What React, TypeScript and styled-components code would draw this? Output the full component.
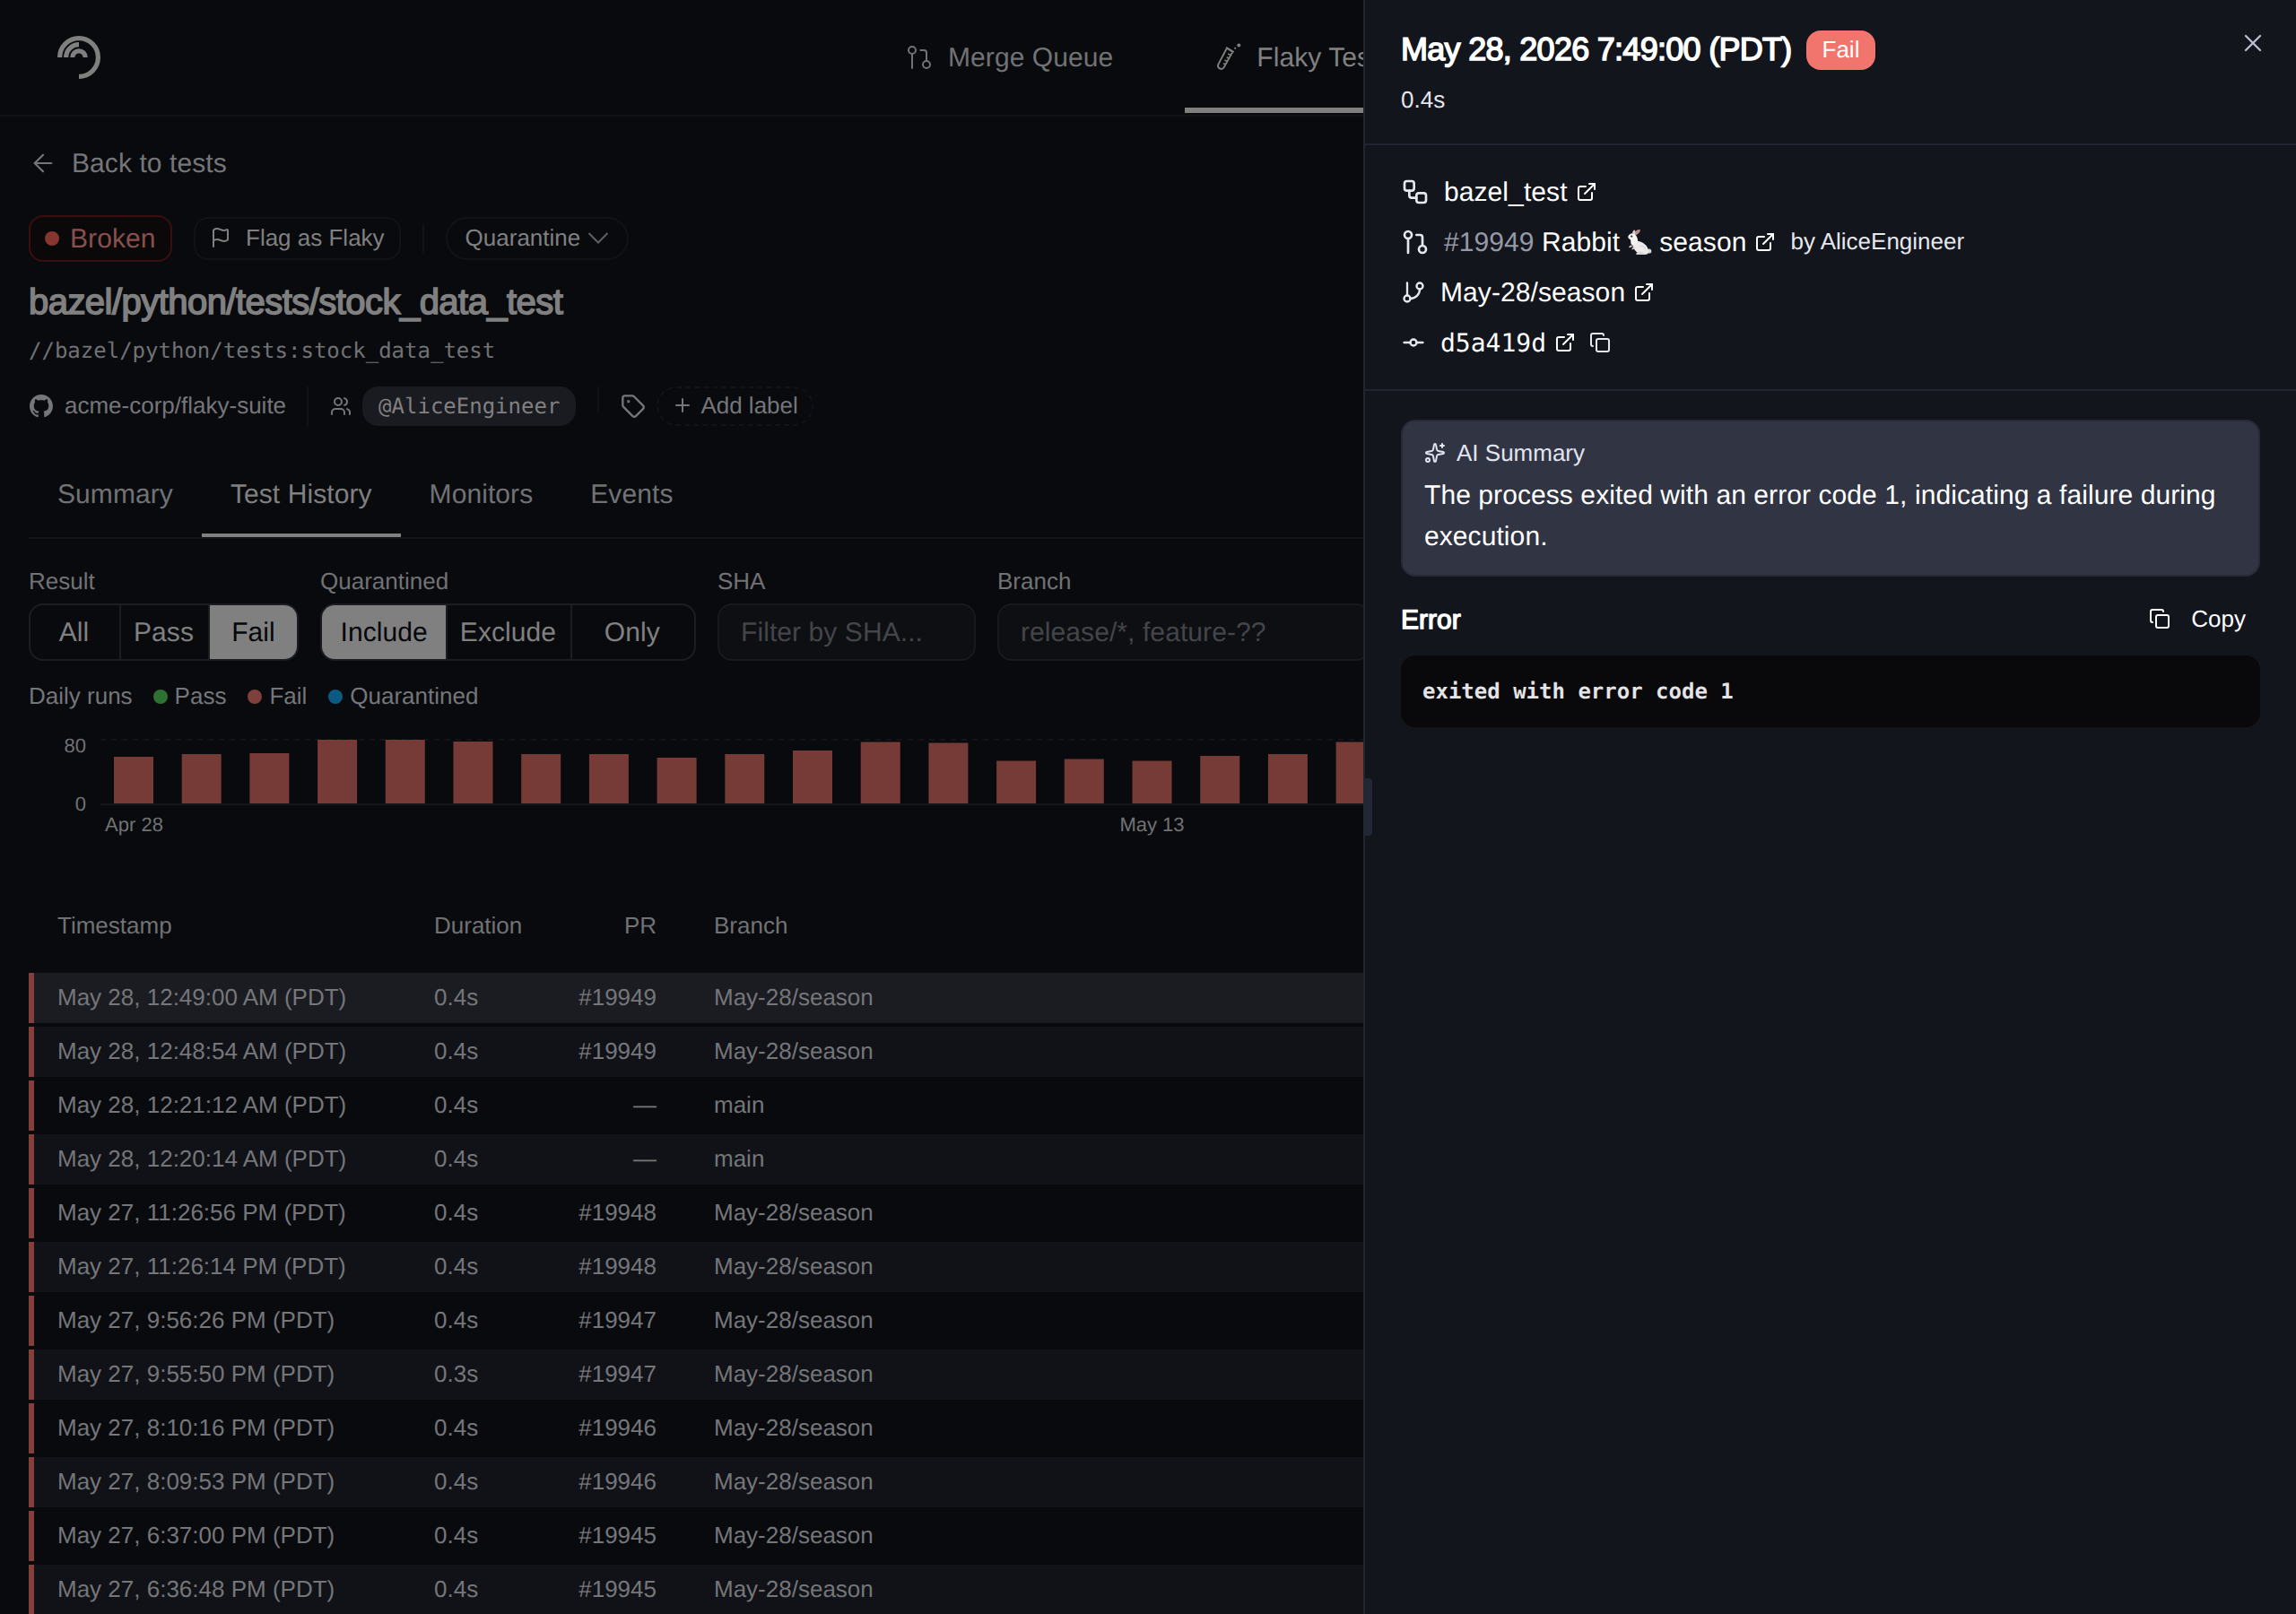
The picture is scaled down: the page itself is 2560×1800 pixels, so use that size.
import React from "react";
import styled, { createGlobalStyle, css } from "styled-components";
import {
  ArrowLeft,
  Copy,
  ExternalLink,
  Flag,
  GitBranch,
  GitCommitHorizontal,
  GitPullRequest,
  Plus,
  Sparkles,
  Tag,
  Users,
  Workflow,
  X,
} from "lucide-react";

const sans = `"Liberation Sans", Arial, Helvetica, sans-serif`;
const mono = `"DejaVu Sans Mono", Menlo, monospace`;

const color = {
  page: "#090a0e",
  line: "#111319",
  control: "#1b1d22",
  field: "#0d0f13",
  strong: "#808080",
  text: "#757679",
  muted: "#717274",
  placeholder: "#434549",
  fail: "#763b37",
  panel: "#12151c",
  panelLine: "#222631",
};

const largeText = css`
  font-size: 30px;
  letter-spacing: 0.08px;
`;

const GlobalStyle = createGlobalStyle`
  * { box-sizing: border-box; }
  body {
    margin: 0;
    background: ${color.page};
    font-family: ${sans};
    font-size: 26px;
    text-rendering: geometricPrecision;
  }
  button { text-rendering: inherit; }
  svg { flex: none; display: block; }
`;

const Shell = styled.div`
  display: grid;
  grid-template-columns: 1520px 1fr;
  width: 2560px;
  height: 1800px;
  overflow: hidden;
`;

/* ---------- Page ---------- */

const Page = styled.div`
  min-width: 0;
  overflow: hidden;
  background: ${color.page};
  color: ${color.text};
  white-space: nowrap;
`;

const TopBar = styled.header`
  display: flex;
  align-items: stretch;
  height: 130px;
  padding-left: 64px;
  border-bottom: 2px solid ${color.line};
`;

const LogoSlot = styled.div`
  display: flex;
  flex: none;
  align-items: center;
  width: 913px;
`;

const Nav = styled.nav`
  display: flex;
  flex: none;
  gap: 48px;
`;

const NavItem = styled.a<{ $active?: boolean }>`
  display: flex;
  flex: none;
  align-items: center;
  gap: 16px;
  height: 126px;
  padding: 8px 32px 0;
  ${largeText}
  color: ${(p) => (p.$active ? color.strong : color.muted)};
  border-bottom: 6px solid ${(p) => (p.$active ? color.strong : "transparent")};
`;

const Nudged = styled.span`
  padding-top: 2px;
`;

const Content = styled.main`
  padding: 0 0 0 32px;
`;

const BackLink = styled.a`
  display: flex;
  align-items: center;
  gap: 16px;
  height: 32px;
  margin-top: 36px;
  ${largeText}
  color: ${color.text};
`;

const StatusRow = styled.div`
  display: flex;
  align-items: center;
  gap: 24px;
  height: 52px;
  margin-top: 42px;
`;

const StatusBadge = styled.span`
  display: flex;
  align-items: center;
  gap: 12px;
  height: 52px;
  width: 160px;
  padding-left: 16px;
  border: 2px solid #3a0f0d;
  border-radius: 16px;
  background: #0b0809;
  color: #86504c;
  ${largeText}
`;

const Dot = styled.i<{ $color: string }>`
  flex: none;
  width: 16px;
  height: 16px;
  border-radius: 50%;
  background: ${(p) => p.$color};
`;

const OutlineButton = styled.button<{ $pill?: boolean }>`
  display: flex;
  align-items: center;
  gap: ${(p) => (p.$pill ? "8px" : "16px")};
  height: 48px;
  padding: ${(p) => (p.$pill ? "0 20px 2px" : "0 16px 2px")};
  border: 2px solid ${color.line};
  border-radius: ${(p) => (p.$pill ? "24px" : "16px")};
  background: none;
  color: ${color.strong};
  font: 26px ${sans};
`;

const Divider = styled.i<{ $height: number; $top?: boolean }>`
  width: 2px;
  height: ${(p) => p.$height}px;
  background: ${color.line};
  ${(p) => p.$top && "align-self: flex-start;"}
`;

const Title = styled.h1`
  margin: 21px 0 0;
  font-size: 40px;
  font-weight: 400;
  line-height: 48px;
  letter-spacing: -0.54px;
  color: ${color.strong};
  -webkit-text-stroke: 1.6px ${color.strong};
`;

const TargetPath = styled.div`
  height: 32px;
  margin-top: 14px;
  font: 24px/32px ${mono};
  color: ${color.muted};
`;

const MetaRow = styled.div`
  display: flex;
  align-items: center;
  height: 44px;
  margin-top: 24px;
  padding-left: 1px;
`;

const MetaIcon = styled.span`
  margin-left: 24px;
`;

const MetaText = styled.span`
  margin: 0 23px 0 13px;
  padding-bottom: 2px;
  color: ${color.text};
`;

const Mention = styled.span`
  height: 44px;
  margin: 0 24px 0 12px;
  padding: 0 18px;
  border-radius: 18px;
  background: #1a1b21;
  color: ${color.strong};
  font: 24px/44px ${mono};
`;

const AddLabel = styled.button`
  display: flex;
  align-items: center;
  gap: 8px;
  height: 44px;
  margin-left: 12px;
  padding: 0 15px 2px;
  border: 2px dashed ${color.line};
  border-radius: 22px;
  background: none;
  color: ${color.text};
  font: 26px ${sans};
`;

const TabBar = styled.nav`
  display: flex;
  height: 98px;
  margin-top: 28px;
  border-bottom: 2px solid ${color.line};
`;

const Tab = styled.a<{ $active?: boolean }>`
  display: flex;
  align-items: center;
  padding: 6px 32px 0;
  ${largeText}
  color: ${(p) => (p.$active ? color.strong : color.muted)};
  border-bottom: 4px solid ${(p) => (p.$active ? color.strong : "transparent")};
`;

const Filters = styled.div`
  display: flex;
  gap: 24px;
  margin-top: 31px;
`;

const Field = styled.div<{ $width: number }>`
  display: flex;
  flex: none;
  flex-direction: column;
  gap: 9px;
  width: ${(p) => p.$width}px;
`;

const FieldLabel = styled.label`
  height: 32px;
  line-height: 32px;
  color: ${color.muted};
`;

const Segmented = styled.div`
  display: grid;
  grid-template-columns: repeat(3, 1fr);
  height: 64px;
  overflow: hidden;
  border: 2px solid ${color.control};
  border-radius: 16px;
`;

const Segment = styled.button<{ $on?: boolean }>`
  padding: 2px ${(p) => (p.$on ? 0 : 2)}px 0 0;
  border: 0;
  border-left: 2px solid ${color.control};
  background: ${(p) => (p.$on ? color.strong : "none")};
  color: ${(p) => (p.$on ? "#06070a" : color.strong)};
  font-family: ${sans};
  ${largeText}
  &:first-child {
    border-left: 0;
  }
`;

const TextField = styled.div`
  display: flex;
  align-items: center;
  height: 64px;
  padding: 2px 24px 0;
  border: 2px solid #17191e;
  border-radius: 16px;
  background: ${color.field};
  color: ${color.placeholder};
  ${largeText}
`;

const Legend = styled.div`
  display: flex;
  align-items: center;
  gap: 24px;
  height: 32px;
  margin-top: 24px;
  padding-bottom: 2px;
`;

const LegendTitle = styled.span`
  margin-right: -1px;
`;

const LegendItem = styled.span`
  display: flex;
  align-items: center;
  gap: 8px;

  ${Dot} {
    margin-top: 2px;
  }
`;

const Chart = styled.svg`
  margin-top: 17px;
  font-size: 22px;
`;

const rowGrid = css`
  display: grid;
  grid-template-columns: 420px 152px 96px 1fr;
  align-items: center;
  padding-left: 26px;
  border-left: 6px solid transparent;
`;

const TableHead = styled.div`
  ${rowGrid}
  height: 64px;
  margin-top: 50px;
  margin-bottom: 21px;
  color: ${color.muted};
`;

const Row = styled.div<{ $bg: string }>`
  ${rowGrid}
  height: 56px;
  margin-bottom: 4px;
  padding-bottom: 2px;
  border-left-color: #843f3b;
  background: ${(p) => p.$bg};
  color: ${color.text};
`;

const Cell = styled.span<{ $pr?: boolean; $branch?: boolean }>`
  ${(p) => p.$pr && "text-align: right;"}
  ${(p) => p.$branch && "padding-left: 64px;"}
`;

/* ---------- Side panel ---------- */

const Panel = styled.aside`
  position: relative;
  border-left: 2px solid ${color.panelLine};
  background: ${color.panel};
  color: #fff;
  white-space: nowrap;
`;

const ResizeHandle = styled.i`
  position: absolute;
  left: 0;
  top: 868px;
  width: 8px;
  height: 64px;
  border-radius: 0 4px 4px 0;
  background: #222735;
`;

const PanelHead = styled.div`
  display: flex;
  justify-content: space-between;
  height: 162px;
  padding: 32px 32px 0 40px;
  border-bottom: 2px solid ${color.panelLine};
`;

const PanelTitleRow = styled.div`
  display: flex;
  align-items: center;
  gap: 16px;
  height: 48px;
`;

const PanelTitle = styled.h2`
  margin: 0;
  padding-bottom: 2px;
  font-size: 36px;
  font-weight: 400;
  line-height: 46px;
  letter-spacing: -0.02em;
  -webkit-text-stroke: 1.5px #fff;
`;

const FailBadge = styled.span`
  height: 44px;
  padding: 0 18px;
  border-radius: 16px;
  background: #f1756d;
  line-height: 42px;
`;

const Duration = styled.div`
  height: 32px;
  margin-top: 15px;
  line-height: 32px;
  color: #e4e5ec;
`;

const CloseButton = styled.button`
  width: 32px;
  height: 32px;
  padding: 0;
  border: 0;
  background: none;
  color: #b8bcca;
`;

const Facts = styled.div`
  display: flex;
  flex-direction: column;
  gap: 24px;
  height: 274px;
  padding: 36px 40px;
  border-bottom: 2px solid ${color.panelLine};
`;

const Fact = styled.div`
  display: flex;
  align-items: center;
  gap: 16px;
  height: 32px;
  ${largeText}
  color: #e6e8f0;
`;

const FactLink = styled.a<{ $mono?: boolean }>`
  display: flex;
  align-items: center;
  gap: 9px;
  color: #fff;
  ${(p) => p.$mono && `font: 28px ${mono}; letter-spacing: 0; margin-right: -1px;`}
`;

const PrTitle = styled.span`
  display: flex;
  align-items: center;
  gap: 8px;
`;

const PrNumber = styled.span`
  color: #9699a6;
`;

const Author = styled.span`
  padding-bottom: 2px;
  font-size: 26px;
  letter-spacing: 0;
  color: #e6e8ee;
`;

const PanelBody = styled.div`
  padding: 32px 40px;
`;

const SummaryCard = styled.section`
  height: 175px;
  padding: 20px 24px;
  border: 2px solid #282b37;
  border-radius: 16px;
  background: #303443;
`;

const SummaryHead = styled.div`
  display: flex;
  align-items: center;
  gap: 12px;
  height: 30px;
  color: #e2e4f0;
`;

const SummaryText = styled.p`
  margin: 10px 0 0;
  ${largeText}
  line-height: 46px;
  white-space: normal;
`;

const ErrorHead = styled.div`
  display: flex;
  align-items: center;
  justify-content: space-between;
  height: 48px;
  margin-top: 24px;
  padding-right: 16px;
`;

const ErrorTitle = styled.h3`
  margin: 0;
  padding-top: 2px;
  font-size: 30px;
  font-weight: 400;
  -webkit-text-stroke: 1.3px #fff;
`;

const CopyButton = styled.button`
  display: flex;
  align-items: center;
  gap: 23px;
  padding: 0 0 2px;
  border: 0;
  background: none;
  color: #fff;
  font: 26px ${sans};
`;

const ErrorOutput = styled.pre`
  height: 80px;
  margin: 16px 0 0;
  padding: 0 24px;
  border-radius: 16px;
  background: #09090b;
  color: #e4e4e7;
  font: bold 24px/80px ${mono};
`;

/* ---------- Drawings ---------- */

const Logo = () => (
  <svg width="48" height="48" viewBox="0 0 48 48" fill="none" stroke={color.strong} strokeWidth="5.2">
    <path d="M2.6 24A21.4 21.4 0 1 1 24 45.4" />
    <path d="M9.7 24A14.3 14.3 0 0 1 24 9.7" />
    <path d="M16.8 24a7.2 7.2 0 0 1 14.4 0" />
  </svg>
);

const TestTubeIcon = () => (
  <svg width="32" height="32" viewBox="0 0 32 32" fill="none" stroke="currentColor" strokeWidth="1.9">
    <path d="M14.5 6.5 5.3 23.8a3.6 3.6 0 0 0 6.3 3.4L20.9 10.6" />
    <path d="M14 5l8.6 5.2" strokeWidth="2.2" />
    <path d="M19 13.5l-2.9-1.6M17.1 17l-2.4-1.3M15.1 20.4l-2.6-1.4M13.1 23.8l-2.2-1.2" strokeWidth="1.6" />
    <circle cx="28.3" cy="2.6" r="2" fill="currentColor" stroke="none" />
    <circle cx="24.2" cy="5.8" r="1.1" fill="currentColor" stroke="none" />
  </svg>
);

const ChevronDown = () => (
  <svg width="24" height="16" viewBox="0 0 24 16" fill="none" stroke="#5f6063" strokeWidth="2">
    <path d="M1.5 3l10.5 10.5L22.5 3" />
  </svg>
);

const GithubMark = () => (
  <svg width="26" height="26" viewBox="0 0 16 16" fill="currentColor">
    <path d="M8 0C3.58 0 0 3.58 0 8c0 3.54 2.29 6.53 5.47 7.59.4.07.55-.17.55-.38 0-.19-.01-.82-.01-1.49-2.01.37-2.53-.49-2.69-.94-.09-.23-.48-.94-.82-1.13-.28-.15-.68-.52-.01-.53.63-.01 1.08.58 1.23.82.72 1.21 1.87.87 2.33.66.07-.52.28-.87.51-1.07-1.78-.2-3.64-.89-3.64-3.95 0-.87.31-1.59.82-2.15-.08-.2-.36-1.02.08-2.12 0 0 .67-.21 2.2.82.64-.18 1.32-.27 2-.27s1.36.09 2 .27c1.53-1.04 2.2-.82 2.2-.82.44 1.1.16 1.92.08 2.12.51.56.82 1.27.82 2.15 0 3.07-1.87 3.75-3.65 3.95.29.25.54.73.54 1.48 0 1.07-.01 1.93-.01 2.2 0 .21.15.46.55.38A8.01 8.01 0 0 0 16 8c0-4.42-3.58-8-8-8z" />
  </svg>
);

const Rabbit = () => (
  <svg width="28" height="30" viewBox="0 0 28 30" role="img" aria-label="rabbit">
    <circle cx="24.8" cy="25" r="2.6" fill="#d5d3d3" />
    <path
      d="M9.5 13.5c5 .3 9.8 2.2 12.6 6.3 2.4 3.6 2.4 7.6.4 8.7-2.5.9-6.7.2-8.3-.4-4.2-1.4-7.2-6-8.2-10.8z"
      fill="#ecebea"
    />
    <path d="M14.5 25.5c-1.5.2-4.6 1.5-4.4 2.9.8.9 6.5.9 8.8.3l.6-1.8z" fill="#d8d6d5" />
    <path d="M4.5 18.5c-1.7.6-2.6 1.6-2.2 2.6.9.4 3.3-.6 4.7-2z" fill="#c9c6c5" />
    <path d="M7 20.5c-1.3 1-1.8 2.3-1.1 3 1 .1 2.8-1.3 3.6-3z" fill="#d4d1d0" />
    <path d="M8 6C8.4 2.8 11.6.8 14.7 1c.8 2.2-1.9 5-5.2 6.6z" fill="#b98a84" />
    <path d="M6.5 6.2C5.6 3.8 6.6 2 8.5 1.2c1 1.6 1.2 3.7.7 5.6z" fill="#d9c9c6" />
    <path
      d="M1.3 8.8C2.3 6.2 4.8 4.9 7.2 5.5c2.2.6 3.3 2.4 4.3 4.7.9 2 .9 4.6-1 6.6-2 2-4.8 1.9-5.8.4-.8-1.4-.1-3.3-.6-4.5-.7-1-3.3-1.8-2.8-3.9z"
      fill="#f5f4f3"
    />
    <circle cx="5.2" cy="8.6" r="1.1" fill="#3a2326" />
    <path d="M1.3 9.2l1.3.2-.8 1.2z" fill="#b07f7c" />
    <path d="M14.5 19.5c3-.8 6 1 6.5 4.2" fill="none" stroke="#c9c7c7" strokeWidth=".9" />
  </svg>
);

/* ---------- Data ---------- */

const barHeights = [52, 55, 56, 71, 71, 69, 55, 55, 51, 55, 59, 68.5, 67.5, 47.5, 49.5, 47.5, 53, 55, 68.5];

const runs: [string, string, string, string][] = [
  ["May 28, 12:49:00 AM (PDT)", "0.4s", "#19949", "May-28/season"],
  ["May 28, 12:48:54 AM (PDT)", "0.4s", "#19949", "May-28/season"],
  ["May 28, 12:21:12 AM (PDT)", "0.4s", "—", "main"],
  ["May 28, 12:20:14 AM (PDT)", "0.4s", "—", "main"],
  ["May 27, 11:26:56 PM (PDT)", "0.4s", "#19948", "May-28/season"],
  ["May 27, 11:26:14 PM (PDT)", "0.4s", "#19948", "May-28/season"],
  ["May 27, 9:56:26 PM (PDT)", "0.4s", "#19947", "May-28/season"],
  ["May 27, 9:55:50 PM (PDT)", "0.3s", "#19947", "May-28/season"],
  ["May 27, 8:10:16 PM (PDT)", "0.4s", "#19946", "May-28/season"],
  ["May 27, 8:09:53 PM (PDT)", "0.4s", "#19946", "May-28/season"],
  ["May 27, 6:37:00 PM (PDT)", "0.4s", "#19945", "May-28/season"],
  ["May 27, 6:36:48 PM (PDT)", "0.4s", "#19945", "May-28/season"],
];

const rowBackground = (i: number) => (i === 0 ? "#1b1c21" : i % 2 ? "#101217" : color.page);

const DailyRunsChart = () => (
  <Chart width="1488" height="140" viewBox="0 0 1488 140" fill={color.muted}>
    <line x1="80" x2="1488" y1="15" y2="15" stroke="#121419" strokeWidth="2" strokeDasharray="6 6" />
    <line x1="80" x2="1488" y1="87" y2="87" stroke="#131519" strokeWidth="2" />
    {barHeights.map((h, i) => (
      <rect key={i} x={95 + i * 75.7} y={86 - h} width="44" height={h} fill={color.fail} />
    ))}
    <text x="64" y="28.5" textAnchor="end">80</text>
    <text x="64" y="93.5" textAnchor="end">0</text>
    <text x="117.5" y="117" textAnchor="middle">Apr 28</text>
    <text x="1252.5" y="117" textAnchor="middle">May 13</text>
  </Chart>
);

const App = () => (
  <>
    <GlobalStyle />
    <Shell>
      <Page>
        <TopBar>
          <LogoSlot>
            <Logo />
          </LogoSlot>
          <Nav>
            <NavItem>
              <GitPullRequest size={32} strokeWidth={1.5} />
              <Nudged>Merge Queue</Nudged>
            </NavItem>
            <NavItem $active>
              <TestTubeIcon />
              <Nudged>Flaky Tests</Nudged>
            </NavItem>
          </Nav>
        </TopBar>
        <Content>
          <BackLink>
            <ArrowLeft size={32} strokeWidth={1.6} />
            <Nudged>Back to tests</Nudged>
          </BackLink>
          <StatusRow>
            <StatusBadge>
              <Dot $color="#86352f" />
              <Nudged>Broken</Nudged>
            </StatusBadge>
            <OutlineButton>
              <Flag size={24} />
              Flag as Flaky
            </OutlineButton>
            <Divider $height={32} />
            <OutlineButton $pill>
              Quarantine
              <ChevronDown />
            </OutlineButton>
          </StatusRow>
          <Title>bazel/python/tests/stock_data_test</Title>
          <TargetPath>//bazel/python/tests:stock_data_test</TargetPath>
          <MetaRow>
            <GithubMark />
            <MetaText>acme-corp/flaky-suite</MetaText>
            <Divider $height={44} />
            <MetaIcon>
              <Users size={24} />
            </MetaIcon>
            <Mention>@AliceEngineer</Mention>
            <Divider $height={28} $top />
            <MetaIcon>
              <Tag size={28} />
            </MetaIcon>
            <AddLabel>
              <Plus size={24} />
              Add label
            </AddLabel>
          </MetaRow>
          <TabBar>
            <Tab>Summary</Tab>
            <Tab $active>Test History</Tab>
            <Tab>Monitors</Tab>
            <Tab>Events</Tab>
          </TabBar>
          <Filters>
            <Field $width={301}>
              <FieldLabel>Result</FieldLabel>
              <Segmented>
                <Segment>All</Segment>
                <Segment>Pass</Segment>
                <Segment $on>Fail</Segment>
              </Segmented>
            </Field>
            <Field $width={419}>
              <FieldLabel>Quarantined</FieldLabel>
              <Segmented>
                <Segment $on>Include</Segment>
                <Segment>Exclude</Segment>
                <Segment>Only</Segment>
              </Segmented>
            </Field>
            <Field $width={288}>
              <FieldLabel>SHA</FieldLabel>
              <TextField>Filter by SHA...</TextField>
            </Field>
            <Field $width={416}>
              <FieldLabel>Branch</FieldLabel>
              <TextField>release/*, feature-??</TextField>
            </Field>
          </Filters>
          <Legend>
            <LegendTitle>Daily runs</LegendTitle>
            <LegendItem>
              <Dot $color="#2f7133" />
              Pass
            </LegendItem>
            <LegendItem>
              <Dot $color="#7f403b" />
              Fail
            </LegendItem>
            <LegendItem>
              <Dot $color="#0b5a83" />
              Quarantined
            </LegendItem>
          </Legend>
          <DailyRunsChart />
          <TableHead>
            <Cell>Timestamp</Cell>
            <Cell>Duration</Cell>
            <Cell $pr>PR</Cell>
            <Cell $branch>Branch</Cell>
          </TableHead>
          {runs.map(([time, duration, pr, branch], i) => (
            <Row key={time} $bg={rowBackground(i)}>
              <Cell>{time}</Cell>
              <Cell>{duration}</Cell>
              <Cell $pr>{pr}</Cell>
              <Cell $branch>{branch}</Cell>
            </Row>
          ))}
        </Content>
      </Page>

      <Panel>
        <ResizeHandle />
        <PanelHead>
          <div>
            <PanelTitleRow>
              <PanelTitle>May 28, 2026 7:49:00 (PDT)</PanelTitle>
              <FailBadge>Fail</FailBadge>
            </PanelTitleRow>
            <Duration>0.4s</Duration>
          </div>
          <CloseButton aria-label="Close">
            <X size={32} strokeWidth={1.8} />
          </CloseButton>
        </PanelHead>
        <Facts>
          <Fact>
            <Workflow size={32} />
            <FactLink>
              <Nudged>bazel_test</Nudged>
              <ExternalLink size={24} />
            </FactLink>
          </Fact>
          <Fact>
            <GitPullRequest size={32} />
            <FactLink>
              <PrTitle>
                <Nudged>
                  <PrNumber>#19949</PrNumber> Rabbit
                </Nudged>
                <Rabbit />
                <Nudged>season</Nudged>
              </PrTitle>
              <ExternalLink size={24} />
            </FactLink>
            <Author>by AliceEngineer</Author>
          </Fact>
          <Fact>
            <GitBranch size={28} />
            <FactLink>
              <Nudged>May-28/season</Nudged>
              <ExternalLink size={24} />
            </FactLink>
          </Fact>
          <Fact>
            <GitCommitHorizontal size={28} />
            <FactLink $mono>
              d5a419d
              <ExternalLink size={24} />
            </FactLink>
            <Copy size={24} />
          </Fact>
        </Facts>
        <PanelBody>
          <SummaryCard>
            <SummaryHead>
              <Sparkles size={24} />
              AI Summary
            </SummaryHead>
            <SummaryText>
              The process exited with an error code 1, indicating a failure during execution.
            </SummaryText>
          </SummaryCard>
          <ErrorHead>
            <ErrorTitle>Error</ErrorTitle>
            <CopyButton>
              <Copy size={24} />
              Copy
            </CopyButton>
          </ErrorHead>
          <ErrorOutput>exited with error code 1</ErrorOutput>
        </PanelBody>
      </Panel>
    </Shell>
  </>
);

export default App;
